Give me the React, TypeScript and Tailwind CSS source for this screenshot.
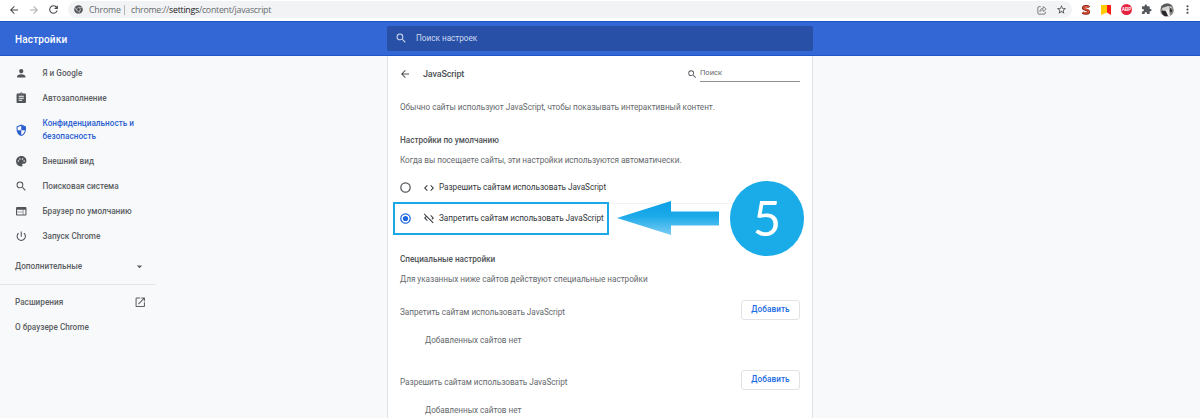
import React from "react";
import {
  MdArrowBack, MdArrowDropDown, MdArrowForward, MdAssignment, MdCode, MdCodeOff, MdExtension,
  MdMoreVert, MdOpenInNew, MdPalette, MdPerson, MdPowerSettingsNew, MdRefresh, MdSearch,
  MdSecurity, MdStarBorder, MdWeb,
} from "react-icons/md";

function ChromeGlyph() {
  return (
    <svg viewBox="0 0 24 24" className="h-[9px] w-[9px] shrink-0">
      <circle cx="12" cy="12" r="11.5" fill="#55585c" />
      <path d="M12 6.5h10M7.3 14.7L2.2 6.2M16.7 14.7L12 23.5" stroke="#d5d7da" strokeWidth="1.6" />
      <circle cx="12" cy="12" r="5.6" fill="#d5d7da" />
      <circle cx="12" cy="12" r="3.8" fill="#45484c" />
    </svg>
  );
}

function ShareGlyph() {
  return (
    <svg viewBox="0 0 24 24" className="h-[10px] w-[10px]" fill="none" stroke="#5f6368" strokeWidth="2">
      <path d="M9 4H5a3 3 0 0 0-3 3v12a3 3 0 0 0 3 3h12a3 3 0 0 0 3-3v-3" />
      <path d="M7 16c0-5 3-8 8-8V3.500l7 6-7 6V11.500c-4 0-6 1.500-8 4.500z" strokeWidth="1.7" />
    </svg>
  );
}

function Toolbar() {
  return (
    <div className="flex h-[21px] shrink-0 items-start bg-white">
      <div className="flex h-[19px] w-[68px] shrink-0 items-center pl-[8px] text-[#45494d]">
        <MdArrowBack size={12} />
        <MdArrowForward size={12} className="ml-[8px] text-[#a9acaf]" />
        <MdRefresh size={13} className="ml-[7px]" />
      </div>
      <div className="mt-px flex h-[17px] w-[1004px] shrink-0 items-center rounded-full bg-[#f1f3f4] pl-[6px] pr-[5px] font-['Open_Sans',sans-serif] text-[8.8px] tracking-[-0.26px] text-[#686c70]">
        <ChromeGlyph />
        <span className="ml-[6px] w-[35px] whitespace-nowrap pt-px leading-[14px] tracking-[-0.2px]">Chrome</span>
        <span className="h-[10px] w-px bg-[#b4b7ba]" />
        <span className="ml-[6px] whitespace-nowrap pt-px leading-[14px]">
          chrome://<span className="text-[#202124]">settings</span>/content/javascript
        </span>
        <span className="ml-auto flex items-center gap-[9px]">
          <ShareGlyph />
          <MdStarBorder size={11} className="text-[#4c5054]" />
        </span>
      </div>
      <div className="flex h-[19px] flex-1 items-center pl-[9px]">
        <svg viewBox="0 0 10 10" className="h-[10px] w-[10px]" fill="none">
          <path d="M8.300 2.200C7 .9 2.500.8 2.200 3c-.2 2 5.600 1.400 5.600 3.700C7.800 8.900 3.500 8.900 1.500 7.600" stroke="#7c2317" strokeWidth="2.600" />
          <path d="M8 2C6.800 1 3 1 2.600 2.700c-.2 2 5.500 1.800 5.300 3.900C7.600 8.400 3.500 8.500 1.700 7.200" stroke="#e8553c" strokeWidth="1.300" />
        </svg>
        <svg viewBox="0 0 10 10" className="ml-[10px] h-[10px] w-[10px]">
          <path d="M0 0h6v7.500L0 10z" fill="#ffcc00" />
          <path d="M6 0h4v10L6 7.500z" fill="#ff1a1a" />
        </svg>
        <span className="ml-[10px] flex h-[11px] w-[11px] items-center justify-center rounded-full bg-[#e5213f] font-['Liberation_Sans',sans-serif] text-[4.5px] font-bold leading-[11px] text-white">
          ABP
        </span>
        <MdExtension size={11} className="ml-[9px] text-[#54585c]" />
        <svg viewBox="0 0 14 14" className="ml-[8px] h-[14px] w-[14px]">
          <circle cx="7" cy="7" r="6.800" fill="#8b8b88" />
          <path d="M1 4C4 0 9 0 12 2.500L8 5 1.500 6z" fill="#55595c" />
          <path d="M2 5l6-2 4 1-3 3-6 1z" fill="#d3d4d2" />
          <path d="M6 7l3-.5 1 6.500-4 .5z" fill="#eeeeec" />
          <path d="M3 7.500l3 1 2 4.500-3 .2C3 12 1.500 10 1.500 8.500zM9.500 4l3 4-2 1.500z" fill="#242628" />
        </svg>
        <MdMoreVert size={13} className="ml-[7px] text-[#4f5357]" />
      </div>
    </div>
  );
}

const navItems = [
  { icon: MdPerson, label: "Я и Google" },
  { icon: MdAssignment, label: "Автозаполнение" },
  { icon: MdSecurity, label: "Конфиденциальность и безопасность", active: true },
  { icon: MdPalette, label: "Внешний вид" },
  { icon: MdSearch, label: "Поисковая система" },
  { icon: MdWeb, label: "Браузер по умолчанию" },
  { icon: MdPowerSettingsNew, label: "Запуск Chrome" },
];

function Sidebar() {
  return (
    <nav className="w-[387px] shrink-0 pt-[5px] text-[8.2px] font-medium tracking-[0.01px] text-[#5c5f63]">
      {navItems.map(({ icon: Icon, label, active }) => (
        <div
          key={label}
          className={
            active
              ? "flex h-[37.5px] items-center pl-[15px] text-[#2b5fd0]"
              : "flex h-[25px] items-center pl-[15px]"
          }
        >
          <Icon size={12.5} className={active ? "shrink-0" : "shrink-0 text-[#505458]"} />
          <span className="ml-[15px] w-[110px] leading-[12.5px]">{label}</span>
        </div>
      ))}
      <div className="mt-[3px] flex h-[30px] w-[155px] items-center justify-between pl-[15px] pr-[9px]">
        <span>Дополнительные</span>
        <MdArrowDropDown size={13} />
      </div>
      <div className="mt-[2px] h-px w-[156px] bg-[#e3e5e8]" />
      <div className="mt-[5px] flex h-[25px] w-[155px] items-center justify-between pl-[15px] pr-[9px]">
        <span>Расширения</span>
        <MdOpenInNew size={12.5} />
      </div>
      <div className="flex h-[25px] items-center pl-[15px]">О браузере Chrome</div>
    </nav>
  );
}

function Radio({ checked }: { checked?: boolean }) {
  return (
    <svg viewBox="0 0 11 11" className="-ml-[0.5px] mr-[0.5px] h-[11px] w-[11px] shrink-0" fill="none">
      <circle cx="5.5" cy="5.5" r="4.7" stroke={checked ? "#1a66e0" : "#505458"} strokeWidth="1.2" />
      {checked && <circle cx="5.5" cy="5.5" r="2.6" fill="#1a66e0" />}
    </svg>
  );
}

function SiteList({ title }: { title: string }) {
  return (
    <div className="h-[70px]">
      <div className="flex h-[25px] items-center justify-between">
        <span className="pt-[5px]">{title}</span>
        <button className="h-[20px] w-[59px] rounded-[3px] border border-[#e1e3e6] text-[8.2px] font-medium tracking-[0.08px] text-[#1a6be3]">
          Добавить
        </button>
      </div>
      <div className="flex h-[37px] items-center pl-[25px]">Добавленных сайтов нет</div>
    </div>
  );
}

function Content() {
  return (
    <main className="relative w-[426px] shrink-0 border-x border-[#e2e3e5] bg-white pl-[12px] pr-[12px] text-[8.2px] tracking-[-0.03px] text-[#66696d]">
      <div className="flex h-[36px] items-center">
        <MdArrowBack size={12} className="-ml-px text-[#505458]" />
        <h1 className="ml-[12px] pt-px text-[9px] font-medium tracking-[-0.15px] text-[#4c5054]">JavaScript</h1>
        <div className="ml-auto flex items-center">
          <MdSearch size={10.5} className="mr-[2.5px] text-[#505458]" />
          <div className="mb-[2px] h-[17px] w-[100px] border-b border-[#8d9093] pt-[1px] text-[7.6px] leading-[14px] tracking-[-0.05px]">
            Поиск
          </div>
        </div>
      </div>
      <p className="flex h-[31px] items-center whitespace-nowrap">
        Обычно сайты используют JavaScript, чтобы показывать интерактивный контент.
      </p>
      <h2 className="flex h-[35px] items-center font-medium text-[#505357]">Настройки по умолчанию</h2>
      <p className="flex h-[5px] items-center whitespace-nowrap">
        Когда вы посещаете сайты, эти настройки используются автоматически.
      </p>
      <div className="mt-[9px] flex h-[31px] items-center tracking-[-0.04px] text-[#34373b]">
        <Radio />
        <MdCode size={12} className="ml-[12px] mr-[4px]" />
        <span>Разрешить сайтам использовать JavaScript</span>
      </div>
      <div className="flex h-[31px] items-center border-t border-[#f2f3f4] pb-[2px] tracking-[-0.04px] text-[#34373b]">
        <Radio checked />
        <MdCodeOff size={12} className="ml-[12px] mr-[4px]" />
        <span>Запретить сайтам использовать JavaScript</span>
      </div>
      <h2 className="mt-[15px] flex h-[21px] items-center font-medium text-[#505357]">Специальные настройки</h2>
      <p className="flex h-[19px] items-center">Для указанных ниже сайтов действуют специальные настройки</p>
      <div className="pt-[8px]">
        <SiteList title="Запретить сайтам использовать JavaScript" />
        <SiteList title="Разрешить сайтам использовать JavaScript" />
      </div>
      <div className="absolute left-[5px] top-[146px] h-[33px] w-[216px] border-2 border-[#19a8e8]" />
      <svg viewBox="0 0 102 34" className="absolute left-[229px] top-[145px] h-[34px] w-[102px]">
        <defs>
          <linearGradient id="arrow" x1="0" y1="0" x2="0" y2="1">
            <stop offset="0" stopColor="#0a9fe6" />
            <stop offset="0.45" stopColor="#1caae9" />
            <stop offset="1" stopColor="#7accf3" />
          </linearGradient>
        </defs>
        <path d="M0 17L54 0v10.500h48v14H54V34z" fill="url(#arrow)" />
      </svg>
      <div className="absolute left-[342px] top-[125px] flex h-[75px] w-[74px] items-center justify-center rounded-full bg-[#1aace8] pb-[2px] font-['Lato',sans-serif] text-[49px] leading-none tracking-normal text-white">
        5
      </div>
    </main>
  );
}

export default function App() {
  return (
    <div className="flex h-[418px] w-[1200px] flex-col overflow-hidden bg-[#f8f9fb] font-['Roboto',sans-serif]">
      <Toolbar />
      <header className="flex h-[35px] shrink-0 items-center border-y border-[#1f57cb] bg-[#3367d6] text-white">
        <div className="w-[387px] pl-[15px] pt-px text-[10px] font-medium tracking-[0.15px]">Настройки</div>
        <div className="flex h-[25px] w-[426px] items-center rounded-[2px] bg-[#2850a7] pl-[8px] text-[8.2px] tracking-[-0.01px] text-[#d0daf0]">
          <MdSearch size={12.5} className="mr-[8.5px]" />
          Поиск настроек
        </div>
      </header>
      <div className="flex min-h-0 flex-1">
        <Sidebar />
        <Content />
      </div>
    </div>
  );
}
